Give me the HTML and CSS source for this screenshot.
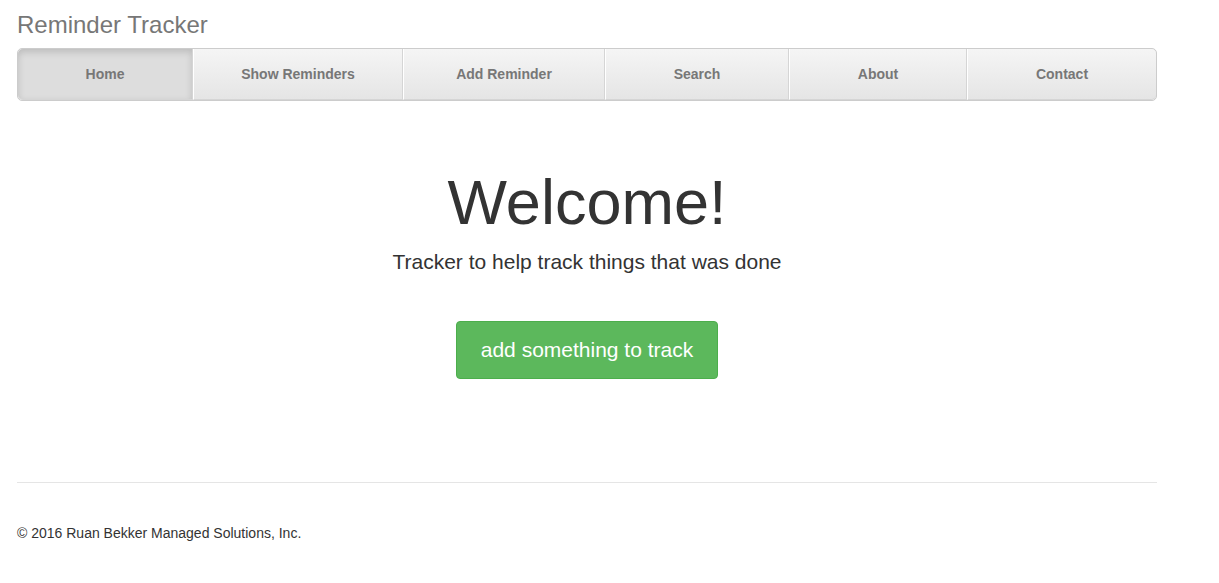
FILE: index.html
```html
<!DOCTYPE html>
<html lang="en">
<head>
<meta charset="utf-8">
<title>Reminder Tracker</title>
<link rel="stylesheet" href="styles.css">
</head>
<body>
<div class="container">
  <div class="masthead">
    <h3 class="text-muted">Reminder Tracker</h3>
    <nav>
      <ul class="nav-justified">
        <li class="active"><a href="#">Home</a></li>
        <li><a href="#">Show Reminders</a></li>
        <li><a href="#">Add Reminder</a></li>
        <li><a href="#">Search</a></li>
        <li><a href="#">About</a></li>
        <li><a href="#">Contact</a></li>
      </ul>
    </nav>
  </div>

  <div class="jumbotron">
    <h1>Welcome!</h1>
    <p class="lead">Tracker to help track things that was done</p>
    <p class="cta"><a class="btn-success" href="#">add something to track</a></p>
  </div>

  <footer class="footer">
    <p>&copy; 2016 Ruan Bekker Managed Solutions, Inc.</p>
  </footer>
</div>
</body>
</html>
```
FILE: styles.css
```css
* { box-sizing: border-box; }
html, body { margin: 0; padding: 0; }
body {
  font-family: "Liberation Sans", Arial, Helvetica, sans-serif;
  font-size: 14px;
  line-height: 1.42857;
  color: #333;
  background: #fff;
}
a { text-decoration: none; }
.container {
  width: 1140px;
  margin-left: 17px;
}
.text-muted {
  color: #777;
  font-size: 24px;
  font-weight: 400;
  line-height: 1.1;
  margin: 12px 0 10px;
}
.nav-justified {
  display: grid;
  grid-template-columns: 175px 210px 202px 184px 178px 189px;
  list-style: none;
  margin: 0;
  padding: 0;
  background-color: #eee;
  border: 1px solid #ccc;
  border-radius: 5px;
}
.nav-justified > li > a {
  display: block;
  padding: 15px 0;
  line-height: 20px;
  font-weight: bold;
  color: #777;
  text-align: center;
  white-space: nowrap;
  background-color: #e5e5e5;
  background-image: linear-gradient(to bottom, #f5f5f5 0, #e5e5e5 100%);
  border-bottom: 1px solid #d5d5d5;
  border-left: 1px solid #fff;
  border-right: 1px solid #d5d5d5;
}
.nav-justified > li:first-child > a {
  border-left: 0;
  border-radius: 5px 0 0 5px;
}
.nav-justified > li:last-child > a {
  border-right: 0;
  border-radius: 0 5px 5px 0;
}
.nav-justified > .active > a {
  background-color: #ddd;
  background-image: none;
  box-shadow: inset 0 3px 7px rgba(0, 0, 0, .15);
}
.jumbotron {
  text-align: center;
  padding: 48px 0 63px;
  margin-bottom: 30px;
}
.jumbotron h1 {
  font-size: 63px;
  font-weight: 500;
  line-height: 1.1;
  margin: 19px 0 9px;
  color: #333;
}
.lead {
  font-size: 21px;
  font-weight: 300;
  line-height: 1.4;
  margin: 0 0 15px;
}
.cta { margin: 45px 0 0; }
.btn-success {
  display: inline-block;
  padding: 14px 24px;
  font-size: 21px;
  line-height: 1.3333;
  color: #fff;
  background-color: #5cb85c;
  border: 1px solid #4cae4c;
  border-radius: 4px;
}
.footer {
  margin-top: 40px;
  padding: 41px 0 40px;
  border-top: 1px solid #e5e5e5;
}
.footer p { margin: 0; }
```
